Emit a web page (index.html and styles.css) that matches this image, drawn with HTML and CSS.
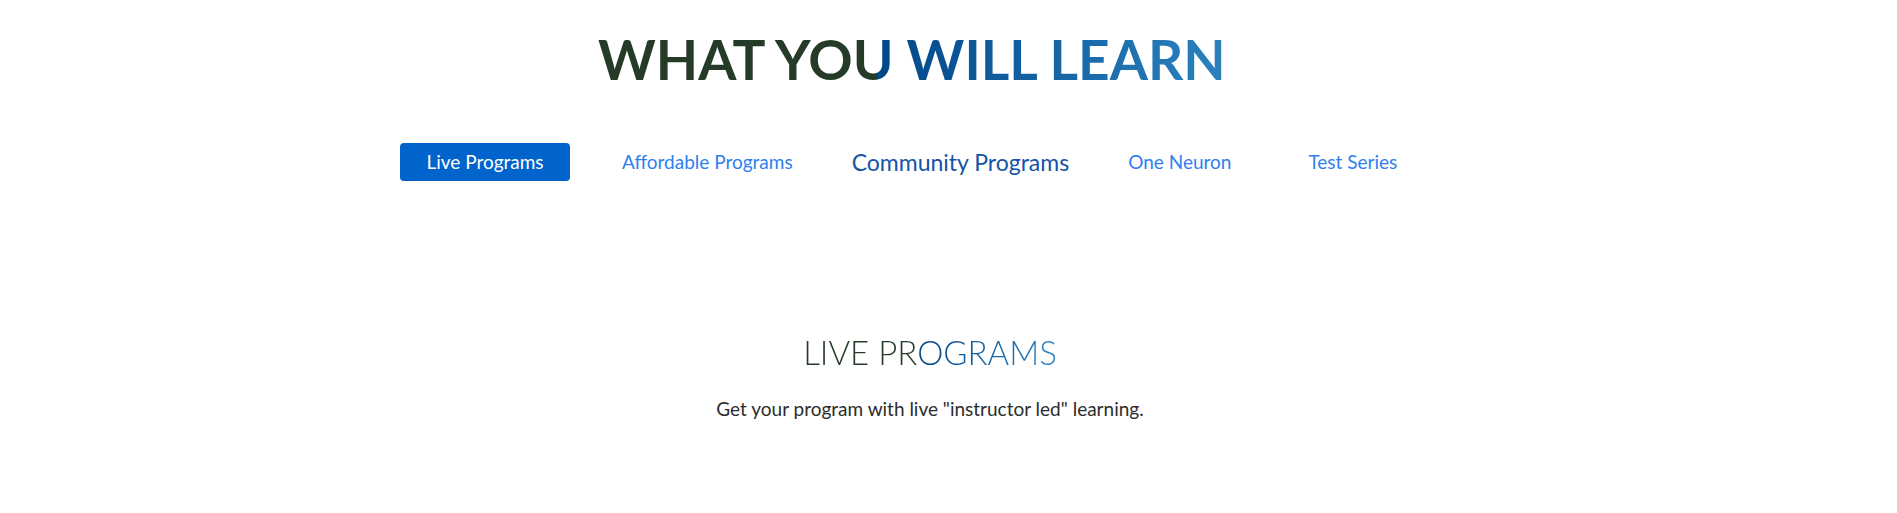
FILE: index.html
```html
<!DOCTYPE html>
<html lang="en">
<head>
<meta charset="utf-8">
<title>What You Will Learn</title>
<link rel="stylesheet" href="styles.css">
</head>
<body>
<section class="learn">
  <h1 class="learn-title"><span class="grad grad-title">WHAT YOU WILL LEARN</span></h1>
  <nav class="tabs">
    <a class="tab tab-active">Live Programs</a>
    <a class="tab tab-afford">Affordable Programs</a>
    <a class="tab tab-community">Community Programs</a>
    <a class="tab tab-neuron">One Neuron</a>
    <a class="tab tab-test">Test Series</a>
  </nav>
  <div class="panel">
    <h2 class="panel-title"><span class="grad">LIVE PROGRAMS</span></h2>
    <p class="panel-text">Get your program with live "instructor led" learning.</p>
  </div>
</section>
</body>
</html>
```
FILE: styles.css
```css
html, body {
  margin: 0;
  padding: 0;
  background: #ffffff;
}
body {
  font-family: Lato, "Noto Sans", sans-serif;
}
.learn {
  display: flex;
  flex-direction: column;
}
.grad {
  background: linear-gradient(90deg, #253b28 0%, #253b28 45%, #004788 45.5%, #2b82bf 100%);
  -webkit-background-clip: text;
  background-clip: text;
  color: transparent;
}
.grad-title {
  background: linear-gradient(90deg, #253b28 0%, #253b28 44.2%, #004788 44.6%, #2b82bf 100%);
  -webkit-background-clip: text;
  background-clip: text;
}
.learn-title {
  margin: 27px 0 0 598px;
  font-size: 55px;
  font-weight: 700;
  line-height: 64px;
  letter-spacing: 0;
}
.tabs {
  display: flex;
  align-items: center;
  margin: 52px 0 0 400px;
}
.tab {
  display: block;
  font-size: 19px;
  line-height: 38px;
  color: #2f7ff0;
  text-decoration: none;
  white-space: nowrap;
}
.tab-active {
  background: #0064cc;
  color: #ffffff;
  border-radius: 4px;
  width: 170px;
  text-align: center;
}
.tab-afford { margin-left: 52px; }
.tab-community { margin-left: 59px; font-size: 23px; color: #1553a8; }
.tab-neuron { margin-left: 59px; }
.tab-test { margin-left: 77px; }
.panel {
  display: flex;
  flex-direction: column;
  align-items: center;
  margin: 150px 0 0 0;
  padding-right: 37px;
}
.panel-title {
  margin: 0;
  font-size: 33px;
  font-weight: 300;
  line-height: 42px;
}
.panel-text {
  margin: 24px 0 0 0;
  font-size: 19px;
  line-height: 24px;
  color: #2c2c2c;
}
```
